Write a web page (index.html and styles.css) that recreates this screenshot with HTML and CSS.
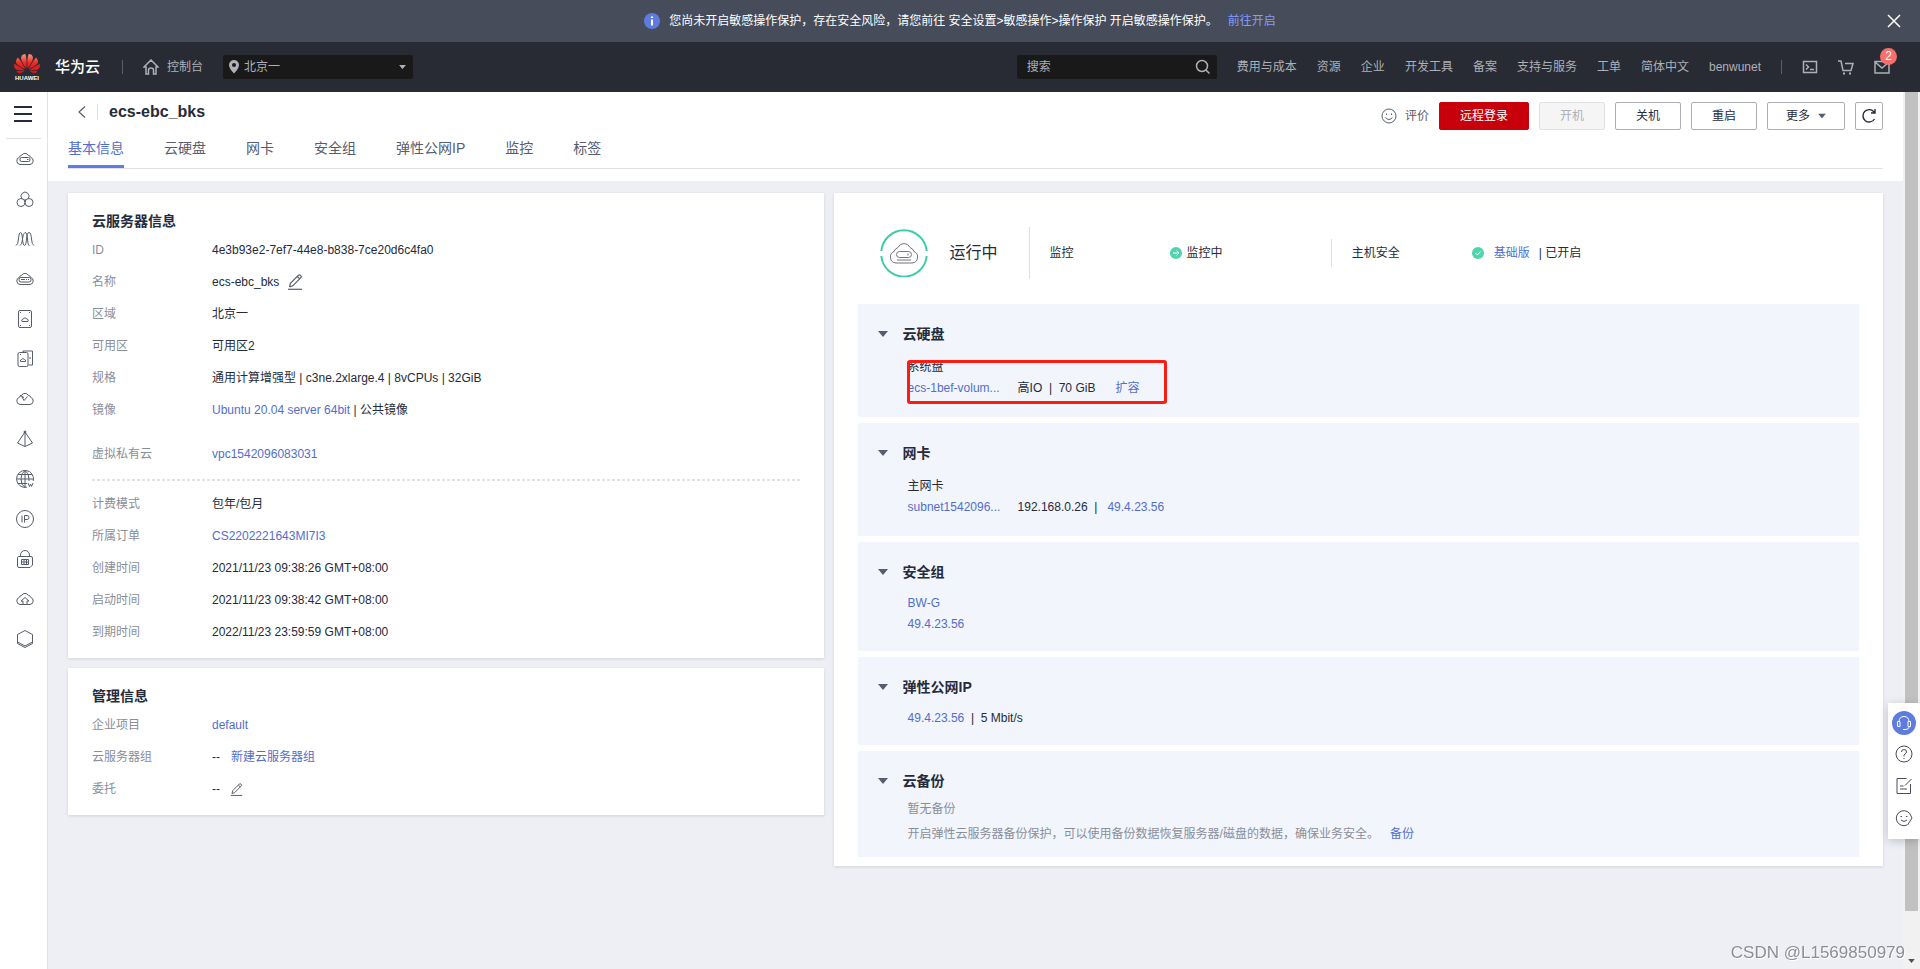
FILE: index.html
```html
<!DOCTYPE html>
<html lang="zh-CN">
<head>
<meta charset="utf-8">
<title>ecs-ebc_bks</title>
<link rel="stylesheet" href="styles.css">
</head>
<body>
<svg class="defs" aria-hidden="true">
  <symbol id="cloud" viewBox="0 0 20 20"><path d="M5 15.500H15A3.700 3.700 0 0 0 15.600 8.300A2.700 2.700 0 0 0 13.200 6.200A3.700 3.700 0 0 0 6.800 6.200A2.700 2.700 0 0 0 4.400 8.300A3.700 3.700 0 0 0 5 15.500Z"/></symbol>
  <symbol id="down" viewBox="0 0 10 6"><path d="M0 0H10L5 6Z"/></symbol>
  <symbol id="pencil" viewBox="0 0 16 16"><path d="M2.500 13L3.400 9.400L11.500 1.200Q12.500.4 13.500 1.400Q14.800 2.600 13.800 3.600L5.800 11.800L2.500 13M10.300 2.500L12.500 4.700"/><path d="M1 15.300H15"/></symbol>
</svg>
<div class="app">
  <div class="alert">
    <div class="alert-body">
      <svg class="i16" viewBox="0 0 16 16"><circle cx="8" cy="8" r="8" fill="#5e7ce0"/><path d="M7 3.500H9V5H7ZM7 6.500H9V12.500H7Z" fill="#fff"/></svg>
      <span>您尚未开启敏感操作保护，存在安全风险，请您前往 安全设置&gt;敏感操作&gt;操作保护 开启敏感操作保护。</span>
      <a href="#">前往开启</a>
    </div>
    <button class="bare close" aria-label="关闭"><svg viewBox="0 0 14 14"><path d="M1 1L13 13M13 1L1 13"/></svg></button>
  </div>

  <header class="topbar">
    <a class="logo" href="#">
      <svg viewBox="0 2 24 19.500"><defs><linearGradient id="lg" x1="0" y1="0" x2="0" y2="1"><stop offset="0" stop-color="#f79a7c"/><stop offset=".45" stop-color="#ee2a24"/><stop offset="1" stop-color="#c8141c"/></linearGradient></defs><path fill="url(#lg)" d="M3.670 6.140S1.820 7.910 1.720 9.780v.35c.08 1.510 1.220 2.400 1.220 2.400 1.830 1.790 6.260 4.040 7.300 4.550 0 0 .06.03.1-.01l.02-.04v-.04C7.520 10.800 3.670 6.140 3.670 6.140zM9.650 18.600c-.02-.08-.1-.08-.1-.08l-7.380.26c.8 1.430 2.150 2.530 3.560 2.200.96-.25 3.160-1.780 3.880-2.300.06-.05.04-.09.04-.09zm.08-.78C6.490 15.630.21 12.280.21 12.280c-.15.46-.2.9-.21 1.300v.07c0 1.070.4 1.820.4 1.820.8 1.690 2.340 2.200 2.340 2.200.7.3 1.400.31 1.400.31.12.02 4.400 0 5.540 0 .05 0 .08-.05.08-.05v-.06c0-.03-.03-.05-.03-.05zM9.060 3.190a3.420 3.420 0 00-2.570 3.150v.41c.03.6.16 1.050.16 1.050.66 2.900 3.860 7.650 4.550 8.650.05.05.1.03.1.03a.1.1 0 00.06-.1c1.060-10.600-1.110-13.420-1.110-13.420-.32.02-1.190.23-1.190.23zm8.299 2.270s-.49-1.800-2.440-2.280c0 0-.57-.14-1.170-.22 0 0-2.180 2.810-1.120 13.430.01.07.06.08.06.08.07.03.1-.03.1-.03.72-1.030 3.900-5.760 4.550-8.640 0 0 .36-1.400.02-2.340zm-2.920 13.070s-.07 0-.09.05c0 0-.01.07.03.1.7.51 2.850 2 3.880 2.300 0 0 .16.05.43.06h.14c.69-.02 1.900-.37 3-2.260l-7.400-.25zm7.830-8.410c.14-2.060-1.940-3.970-1.940-3.980 0 0-3.850 4.660-6.670 10.800 0 0-.03.08.02.13l.04.01h.06c1.060-.53 5.460-2.770 7.280-4.540 0 0 1.150-.93 1.210-2.420zm1.520 2.140s-6.280 3.370-9.520 5.550c0 0-.05.04-.03.11 0 0 .03.06.07.06 1.160 0 5.560 0 5.670-.02 0 0 .57-.02 1.270-.29 0 0 1.560-.5 2.370-2.270 0 0 .73-1.450.17-3.140z"/></svg>
      <span>HUAWEI</span>
    </a>
    <strong class="brand">华为云</strong>
    <i class="sep"></i>
    <a class="console" href="#"><svg class="i16 line" viewBox="0 0 16 16"><path d="M1 8L8 1L15 8H13V15H10.500V11Q10.500 9 8 9Q5.500 9 5.500 11V15H3V8Z"/></svg>控制台</a>
    <label class="region">
      <svg viewBox="0 0 10 14"><path fill-rule="evenodd" d="M5 0A5 5 0 0 1 10 5Q10 8.500 5 13.500Q0 8.500 0 5A5 5 0 0 1 5 0ZM5 3A2 2 0 1 0 5 7A2 2 0 1 0 5 3Z"/></svg>
      <select aria-label="区域"><option>北京一</option></select>
      <svg class="tri" viewBox="0 0 10 6"><use href="#down"/></svg>
    </label>
    <div class="search">
      <input type="text" placeholder="搜索" aria-label="搜索">
      <button class="bare" aria-label="搜索"><svg class="i16 line" viewBox="0 0 16 16"><circle cx="7" cy="7" r="5.500"/><path d="M11 11L14.500 14.500"/></svg></button>
    </div>
    <nav class="menu">
      <a href="#">费用与成本</a><a href="#">资源</a><a href="#">企业</a><a href="#">开发工具</a><a href="#">备案</a><a href="#">支持与服务</a><a href="#">工单</a><a href="#">简体中文</a><a href="#">benwunet</a>
    </nav>
    <i class="sep"></i>
    <div class="tools">
      <button class="bare" aria-label="终端"><svg class="i16 line" viewBox="0 0 16 16"><rect x="1.500" y="2.500" width="13" height="11"/><path d="M4 5.500L6.500 8L4 10.500M8 10.500H12"/></svg></button>
      <button class="bare" aria-label="购物车"><svg class="i16 line" viewBox="0 0 16 16"><path d="M0 2H3L5 11.500H13L15 4.500H7"/><path d="M5 13.500H7V15.500H5ZM11 13.500H13V15.500H11Z" fill="#adb0b8" stroke="none"/></svg></button>
      <button class="bare mail" aria-label="消息"><svg class="i16 line" viewBox="0 0 16 16"><path d="M1 2.500H15V14H1ZM1 3L8 9L15 3"/></svg><span class="badge">2</span></button>
    </div>
  </header>

  <div class="shell">
    <aside class="rail">
      <button class="bare burger" aria-label="菜单"><svg viewBox="0 0 18 16"><path d="M0 1H18M0 8H18M0 15H18"/></svg></button>
      <nav>
        <a href="#" aria-label="弹性云服务器"><svg viewBox="0 0 20 20"><use href="#cloud"/><rect x="5" y="8.500" width="10" height="4" rx="1.500"/><path d="M12 10.500H13.500"/></svg></a>
        <a href="#" aria-label="裸金属"><svg viewBox="0 0 20 20"><path d="M7 9.800A4 4 0 1 1 13 9.800"/><circle cx="6" cy="13.500" r="4"/><circle cx="14" cy="13.500" r="4"/><path d="M10 10V13"/></svg></a>
        <a href="#" aria-label="弹性伸缩"><svg viewBox="0 0 20 20"><path d="M1 16.500Q3 16 3.500 10Q4 3.500 5.500 3.500T7.500 10T9.500 16.500T11.500 10Q12 3.500 14 3.500Q16 3.500 16.500 10Q17 16 19 16.500M5 16.500Q7 16 7.500 10T10 3.500T12.500 10T14.500 16.500"/></svg></a>
        <a href="#" aria-label="云服务器"><svg viewBox="0 0 20 20"><use href="#cloud"/><rect x="4" y="8.500" width="12" height="4.500" rx="2"/><path d="M6 10.500H10M11 10.500H12M13 10.500H14"/></svg></a>
        <a href="#" aria-label="云硬盘"><svg viewBox="0 0 20 20"><rect x="3.500" y="1.500" width="13" height="17" rx="1.500"/><path d="M7 12.500H13Q14 10.500 12 10Q10 7.500 8 10Q6 10.500 7 12.500M5 3.500H6M14 3.500H15M5 16.500H6M14 16.500H15"/></svg></a>
        <a href="#" aria-label="专属存储"><svg viewBox="0 0 20 20"><rect x="3" y="3.500" width="10" height="14" rx="1.500"/><path d="M5.500 12.500H10.500Q11 10.500 9.500 10.500Q8 8.500 6.500 10.500Q5 10.500 5.500 12.500M8 3V2H17.500V16H13.500M15 8V10M5 5.500H6"/></svg></a>
        <a href="#" aria-label="对象存储"><svg viewBox="0 0 20 20"><use href="#cloud"/><path d="M7 8L9 11.500L12.500 7.500M5 6.500L9 8.500"/></svg></a>
        <a href="#" aria-label="虚拟私有云"><svg viewBox="0 0 20 20"><path d="M10 3L2.500 14L10 17.500L17.500 14ZM10 3V17.500"/><circle cx="10" cy="3" r="1" fill="#575d6c"/></svg></a>
        <a href="#" aria-label="内容分发"><svg viewBox="0 0 20 20"><path d="M12 18.200A8.500 8.500 0 1 1 18.300 12M10 1.500Q6 4 6 10T10 18.500M10 1.500Q14 4 14 10V12M1.500 10H18.500M3 5.500H17M3 14.500H12M10 1.500V18.500"/><path d="M13 14L14.500 17.500L15.500 15L16.500 17.500L18 14"/></svg></a>
        <a href="#" aria-label="弹性公网IP"><svg viewBox="0 0 20 20"><circle cx="10" cy="10" r="8.500"/><path d="M7 6.500V13.500M9.500 13.500V6.500H12Q14 6.500 14 8.500T12 10.500H9.500"/></svg></a>
        <a href="#" aria-label="安全"><svg viewBox="0 0 20 20"><path d="M2.500 8.500Q2.500 7.500 4 7.500H16Q17.500 7.500 17.500 9V16L15 18.500H4Q2.500 18.500 2.500 17ZM5.500 7.500V6A4.500 4.500 0 0 1 14.500 6V7.500"/><path d="M6.500 10.500H13.500V15.500H6.500ZM6.500 13H13.500M9 10.500V15.500M11.500 10.500V15.500"/></svg></a>
        <a href="#" aria-label="云备份"><svg viewBox="0 0 20 20"><use href="#cloud"/><path d="M8 15.500V12H6L10 8.500L14 12H12V15.500"/></svg></a>
        <a href="#" aria-label="容器"><svg viewBox="0 0 20 20"><path d="M10 1.500L17.500 5.500V14.500L10 18.500L2.500 14.500V5.500ZM2.500 13L10 17L17.500 13"/></svg></a>
      </nav>
    </aside>

    <main class="main">
      <div class="page-head">
        <div class="head-row">
          <div class="head-title">
            <button class="bare back" aria-label="返回"><svg viewBox="0 0 8 12"><path d="M7 0.500L1 6L7 11.500"/></svg></button>
            <i class="vline"></i>
            <h1>ecs-ebc_bks</h1>
          </div>
          <div class="actions">
            <a class="rate" href="#"><svg class="i16" viewBox="0 0 16 16"><circle cx="8" cy="8" r="7"/><path d="M4.500 9.500Q8 13.500 11.500 9.500M5.500 5.500V7M10.500 5.500V7"/></svg>评价</a>
            <button class="btn primary">远程登录</button>
            <button class="btn" disabled>开机</button>
            <button class="btn">关机</button>
            <button class="btn">重启</button>
            <button class="btn more">更多<svg viewBox="0 0 10 6"><use href="#down"/></svg></button>
            <button class="btn refresh" aria-label="刷新"><svg class="i16" viewBox="0 0 16 16"><path d="M13.500 11A6.200 6.200 0 1 1 13.200 4.200M14 1V5H10"/></svg></button>
          </div>
        </div>
        <nav class="tabs">
          <a class="on" href="#">基本信息</a><a href="#">云硬盘</a><a href="#">网卡</a><a href="#">安全组</a><a href="#">弹性公网IP</a><a href="#">监控</a><a href="#">标签</a>
        </nav>
      </div>

      <div class="columns">
        <div class="stack">
          <section class="card">
            <h2>云服务器信息</h2>
            <dl>
              <dt>ID</dt><dd>4e3b93e2-7ef7-44e8-b838-7ce20d6c4fa0</dd>
              <dt>名称</dt><dd>ecs-ebc_bks<button class="bare edit" aria-label="编辑名称"><svg class="i16" viewBox="0 0 16 16"><use href="#pencil"/></svg></button></dd>
              <dt>区域</dt><dd>北京一</dd>
              <dt>可用区</dt><dd>可用区2</dd>
              <dt>规格</dt><dd>通用计算增强型 | c3ne.2xlarge.4 | 8vCPUs | 32GiB</dd>
              <dt>镜像</dt><dd><a href="#">Ubuntu 20.04 server 64bit</a>&nbsp;| 公共镜像</dd>
            </dl>
            <dl class="vpc">
              <dt>虚拟私有云</dt><dd><a href="#">vpc1542096083031</a></dd>
            </dl>
            <dl>
              <dt>计费模式</dt><dd>包年/包月</dd>
              <dt>所属订单</dt><dd><a href="#">CS2202221643MI7I3</a></dd>
              <dt>创建时间</dt><dd>2021/11/23 09:38:26 GMT+08:00</dd>
              <dt>启动时间</dt><dd>2021/11/23 09:38:42 GMT+08:00</dd>
              <dt>到期时间</dt><dd>2022/11/23 23:59:59 GMT+08:00</dd>
            </dl>
          </section>
          <section class="card">
            <h2>管理信息</h2>
            <dl>
              <dt>企业项目</dt><dd><a href="#">default</a></dd>
              <dt>云服务器组</dt><dd>--<a class="next" href="#">新建云服务器组</a></dd>
              <dt>委托</dt><dd>--<button class="bare edit small" aria-label="编辑委托"><svg viewBox="0 0 16 16"><use href="#pencil"/></svg></button></dd>
            </dl>
          </section>
        </div>

        <section class="card overview">
          <div class="status">
            <svg class="ring" viewBox="0 0 48 48"><path d="M1.300 22A22.800 22.800 0 0 1 46.700 22M1.300 27A22.800 22.800 0 0 0 46.700 27" stroke="#3dcca6" stroke-width="2"/><path d="M16 34H32A6 6 0 0 0 34 22.500Q33 19.500 30 18.500A6.500 6.500 0 0 0 18 18.500Q15 19.500 14 22.500A6 6 0 0 0 16 34Z"/><rect x="16.500" y="22.500" width="15" height="6" rx="3"/><path d="M28 24.500V26.500M17 31H31"/></svg>
            <span class="state">运行中</span>
            <div class="cell tall">
              <span class="name">监控</span>
              <svg class="dot" viewBox="0 0 12 12"><circle cx="6" cy="6" r="6"/><path d="M3 6H9M6.500 3.500L9 6L6.500 8.500"/></svg>
              <span>监控中</span>
            </div>
            <div class="cell wide">
              <span class="name">主机安全</span>
              <svg class="dot" viewBox="0 0 12 12"><circle cx="6" cy="6" r="6"/><path d="M3.500 6L5.500 8L8.500 4.500"/></svg>
              <span class="pair"><a href="#">基础版</a><span>| 已开启</span></span>
            </div>
          </div>

          <div class="panels">
            <section class="panel">
              <h3><svg viewBox="0 0 10 6"><use href="#down"/></svg>云硬盘</h3>
              <div class="body">
                <div class="row">系统盘</div>
                <div class="row"><a class="res" href="#">ecs-1bef-volum...</a><span>高IO&nbsp; |&nbsp; 70 GiB</span><a class="after" href="#">扩容</a></div>
                <div class="mark"></div>
              </div>
            </section>
            <section class="panel">
              <h3><svg viewBox="0 0 10 6"><use href="#down"/></svg>网卡</h3>
              <div class="body">
                <div class="row">主网卡</div>
                <div class="row"><a class="res" href="#">subnet1542096...</a><span>192.168.0.26&nbsp; |&nbsp;&nbsp; <a href="#">49.4.23.56</a></span></div>
              </div>
            </section>
            <section class="panel snug">
              <h3><svg viewBox="0 0 10 6"><use href="#down"/></svg>安全组</h3>
              <div class="body">
                <div class="row"><a href="#">BW-G</a></div>
                <div class="row"><a href="#">49.4.23.56</a></div>
              </div>
            </section>
            <section class="panel snug">
              <h3><svg viewBox="0 0 10 6"><use href="#down"/></svg>弹性公网IP</h3>
              <div class="body">
                <div class="row"><a href="#">49.4.23.56</a><span>&nbsp; |&nbsp; 5 Mbit/s</span></div>
              </div>
            </section>
            <section class="panel backup">
              <h3><svg viewBox="0 0 10 6"><use href="#down"/></svg>云备份</h3>
              <div class="body">
                <div class="row">暂无备份</div>
                <div class="row">开启弹性云服务器备份保护，可以使用备份数据恢复服务器/磁盘的数据，确保业务安全。<a class="next" href="#">备份</a></div>
              </div>
            </section>
          </div>
        </section>
      </div>
    </main>

    <div class="scroll" aria-hidden="true">
      <div class="thumb"></div>
      <svg viewBox="0 0 10 6"><use href="#down"/></svg>
    </div>
  </div>
</div>

<div class="float">
  <button class="bare" aria-label="客服"><svg class="big" viewBox="0 0 24 24"><circle cx="12" cy="12" r="12" fill="#5e7ce0" stroke="none"/><path stroke="#fff" d="M7 11Q7 5.500 12 5.500T17 11M5.500 10.500H8V15.500H5.500ZM16 10.500H18.500V15.500H16ZM17.500 15.500Q17 18 14 18.500M11 18.500H14"/></svg></button>
  <button class="bare" aria-label="帮助"><svg viewBox="0 0 18 18"><circle cx="9" cy="9" r="8"/><path d="M6.500 7Q6.500 4.500 9 4.500T11.500 7Q11.500 8 10 9T9 11.500M9 13V14"/></svg></button>
  <button class="bare" aria-label="反馈"><svg viewBox="0 0 18 18"><path d="M11.500 1.500H2V16.500H15.500V7M16.500 2L10 8.500M5 9H8.500M5 12H12"/></svg></button>
  <button class="bare" aria-label="评分"><svg viewBox="0 0 18 18"><path d="M12 16A7.500 7.500 0 1 1 16 7L17 9L12.500 16"/><path d="M6 11Q9 14 12 11M5.500 7.500H7M11 7.500H12.500"/></svg></button>
</div>
<div class="watermark">CSDN @L1569850979</div>
</body>
</html>
```

FILE: styles.css
```css
* { box-sizing: border-box; }

body {
  margin: 0;
  background: #eeeff5;
  color: #252b3a;
  font: 12px/20px "Liberation Sans", "Noto Sans CJK SC", sans-serif;
}

a { color: #526ecc; text-decoration: none; }
h1, h2, h3, dl, dd { margin: 0; }
svg { display: block; flex: none; fill: none; }
button, input, select { font: inherit; }
.defs { position: absolute; width: 0; height: 0; }
.i16 { width: 16px; height: 16px; }
.line { stroke: #adb0b8; stroke-width: 1.500; }
.bare { display: flex; padding: 0; border: 0; background: none; cursor: pointer; }

.app { display: flex; flex-direction: column; min-height: 100vh; }

/* Notice strip */
.alert { display: flex; align-items: center; height: 42px; padding: 0 19px 0 33px; background: #464c59; color: #fff; }
.alert-body { display: flex; flex: 1; justify-content: center; align-items: center; gap: 10px; }
.alert-body .i16 { margin-right: -1px; }
.alert a { color: #859bff; }
.close svg { width: 14px; height: 14px; stroke: #fff; stroke-width: 1.500; }

/* Top navigation */
.topbar { display: flex; align-items: center; height: 50px; padding: 0 30px 0 14px; background: #282b33; color: #adb0b8; white-space: nowrap; }
.topbar a { color: #adb0b8; }
.logo { display: flex; flex-direction: column; align-items: center; width: 26px; }
.logo svg { width: 26px; height: 21px; }
.topbar .logo span { color: #fff; font-size: 6px; font-weight: 700; line-height: 8px; }
.brand { margin: 0 22px 0 15px; color: #fff; font-size: 15px; font-weight: 500; }
.sep { width: 1px; height: 14px; background: #575d6c; }
.console { display: flex; align-items: center; gap: 8px; margin: 0 20px; }
.region { display: flex; align-items: center; gap: 5px; width: 190px; height: 24px; padding: 0 7px 0 6px; border-radius: 2px; background: #191919; }
.region svg { width: 10px; height: 14px; fill: #adb0b8; }
.region .tri { width: 7px; height: 6px; }
.region select { flex: 1; min-width: 0; padding: 0; border: 0; background: none; color: #adb0b8; appearance: none; }
.search { display: flex; align-items: center; width: 200px; height: 24px; margin: 0 20px 0 auto; padding: 0 6px 0 10px; border-radius: 2px; background: #191919; }
.search input { flex: 1; min-width: 0; padding: 0; border: 0; background: none; color: #adb0b8; }
.search input::placeholder { color: #adb0b8; opacity: 1; }
.menu { display: flex; gap: 20px; margin-right: 20px; }
.tools { display: flex; gap: 20px; margin-left: 20px; }
.mail { position: relative; }
.badge { position: absolute; top: -11px; right: -7px; width: 17px; height: 17px; border-radius: 9px; background: #f66f6a; color: #fff; line-height: 17px; text-align: center; }

/* Left icon rail */
.shell { display: grid; grid-template-columns: 48px 1fr 17px; flex: 1; }
.rail { border-right: 1px solid #dfe1e6; background: #fff; }
.burger { width: 35px; height: 47px; margin-left: 6px; padding: 14px 0 0 8px; border-bottom: 1px solid #dfe1e6; }
.burger svg { width: 18px; height: 16px; stroke: #252b3a; stroke-width: 2; }
.rail nav a { display: flex; align-items: center; height: 40px; padding-left: 15px; }
.rail nav svg { width: 20px; height: 20px; stroke: #575d6c; }

/* Page header */
.main { min-width: 0; }
.page-head { padding: 10px 20px 12px; background: #fff; }
.head-row { display: flex; justify-content: space-between; align-items: flex-start; }
.head-title { display: flex; align-items: center; gap: 11px; padding-left: 10px; }
.back svg { width: 8px; height: 12px; stroke: #575d6c; stroke-width: 1.200; }
.vline { width: 1px; height: 16px; background: #dfe1e6; }
.head-title h1 { font-size: 16px; line-height: 20px; }
.actions { display: flex; align-items: center; gap: 10px; }
.rate { display: flex; align-items: center; gap: 8px; color: #575d6c; }
.rate svg { stroke: #575d6c; }
.btn { display: flex; justify-content: center; align-items: center; min-width: 66px; height: 28px; padding: 0 10px; border: 1px solid #adb0b8; border-radius: 2px; background: #fff; color: #252b3a; }
.btn.primary { min-width: 90px; border-color: #c7000b; background: #c7000b; color: #fff; }
.btn:disabled { border-color: #dfe1e6; background: #f5f5f6; color: #adb0b8; }
.btn.more { gap: 8px; min-width: 78px; }
.more svg { width: 8px; height: 6px; fill: #575d6c; }
.btn.refresh { min-width: 28px; padding: 0; }
.refresh svg { stroke: #252b3a; stroke-width: 1.400; }
.tabs { display: flex; gap: 40px; padding-top: 8px; border-bottom: 1px solid #dfe1e6; }
.tabs a { padding-bottom: 7px; border-bottom: 3px solid transparent; color: #575d6c; font-size: 14px; }
.tabs .on { border-color: #5e7ce0; color: #526ecc; }

/* Cards */
.columns { display: grid; grid-template-columns: 18fr 25fr; align-items: start; gap: 10px; padding: 12px 20px; }
.stack { display: grid; gap: 10px; }
.card { padding: 18px 24px 10px; background: #fff; box-shadow: 0 1px 3px rgba(0, 0, 0, .12); }
h2 { margin-bottom: 3px; font-size: 14px; line-height: 20px; }
dl { display: grid; grid-template-columns: 120px 1fr; grid-auto-rows: 32px; align-items: center; }
dt { color: #8a8e99; }
dd { display: flex; align-items: center; }
.vpc { margin: 12px 0 7px; padding-bottom: 11px; background: repeating-linear-gradient(90deg, #dfe1e6 0 3px, #fff 3px 5px) left bottom / 100% 2px no-repeat; }
.next { margin-left: 11px; }
.edit { margin-left: 8px; }
.edit svg { stroke: #575d6c; stroke-width: 1.200; }
.edit.small { margin-left: 10px; }
.small svg { width: 13px; height: 13px; }

/* Running status */
.overview { padding-top: 0; padding-bottom: 9px; }
.status { display: flex; align-items: center; height: 111px; padding: 9px 0 0 22px; }
.ring { width: 48px; height: 48px; stroke: #71757f; }
.state { margin: 0 31px 0 22px; font-size: 16px; }
.cell { display: flex; flex: 295; align-items: center; height: 28px; padding-left: 20px; border-left: 1px solid #dfe1e6; }
.cell.tall { height: 52px; }
.cell.wide { flex: 532; }
.name { width: 120px; }
.dot { width: 12px; height: 12px; margin-right: 5px; stroke: #fff; }
.dot circle { fill: #50d4ab; stroke: none; }
.pair { display: flex; gap: 9px; margin-left: 5px; }

/* Resource panels */
.panels { display: grid; gap: 6px; }
.panel { padding: 20px 20px 18px; background: #f2f5fc; }
h3 { display: flex; align-items: center; gap: 15px; font-size: 14px; line-height: 20px; }
h3 svg { width: 10px; height: 6px; fill: #575d6c; }
.body { position: relative; margin: 13px 0 0 30px; }
.row { display: flex; line-height: 21px; }
.res { min-width: 110px; white-space: nowrap; }
.after { margin-left: 20px; }
.mark { position: absolute; top: 3px; left: -1px; width: 260px; height: 44px; border: 3px solid #fe1b12; border-radius: 3px; }
.snug { padding-bottom: 16px; }
.snug .body { margin-top: 11px; }
.backup { padding-bottom: 10px; }
.backup .body { margin-top: 6px; color: #8a8e99; }
.backup .row { line-height: 25px; }

/* Scroll track */
.scroll { display: flex; flex-direction: column; justify-content: space-between; align-items: center; padding-bottom: 6px; background: #f1f1f1; }
.thumb { width: 13px; height: 94%; background: #c1c1c1; }
.scroll svg { width: 7px; height: 4px; fill: #505050; }

/* Floating help bar and watermark */
.float { position: fixed; right: 0; bottom: 130px; display: flex; flex-direction: column; align-items: center; gap: 14px; width: 32px; padding: 8px 0 12px; background: #fff; box-shadow: 0 2px 10px rgba(0, 0, 0, .2); }
.float svg { width: 18px; height: 18px; stroke: #464c59; }
.float .big { width: 24px; height: 24px; margin-bottom: -4px; }
.watermark { position: fixed; right: 15px; bottom: 6px; color: #8c8e94; font-size: 17px; text-shadow: 1px 1px 0 #fff; }
```
